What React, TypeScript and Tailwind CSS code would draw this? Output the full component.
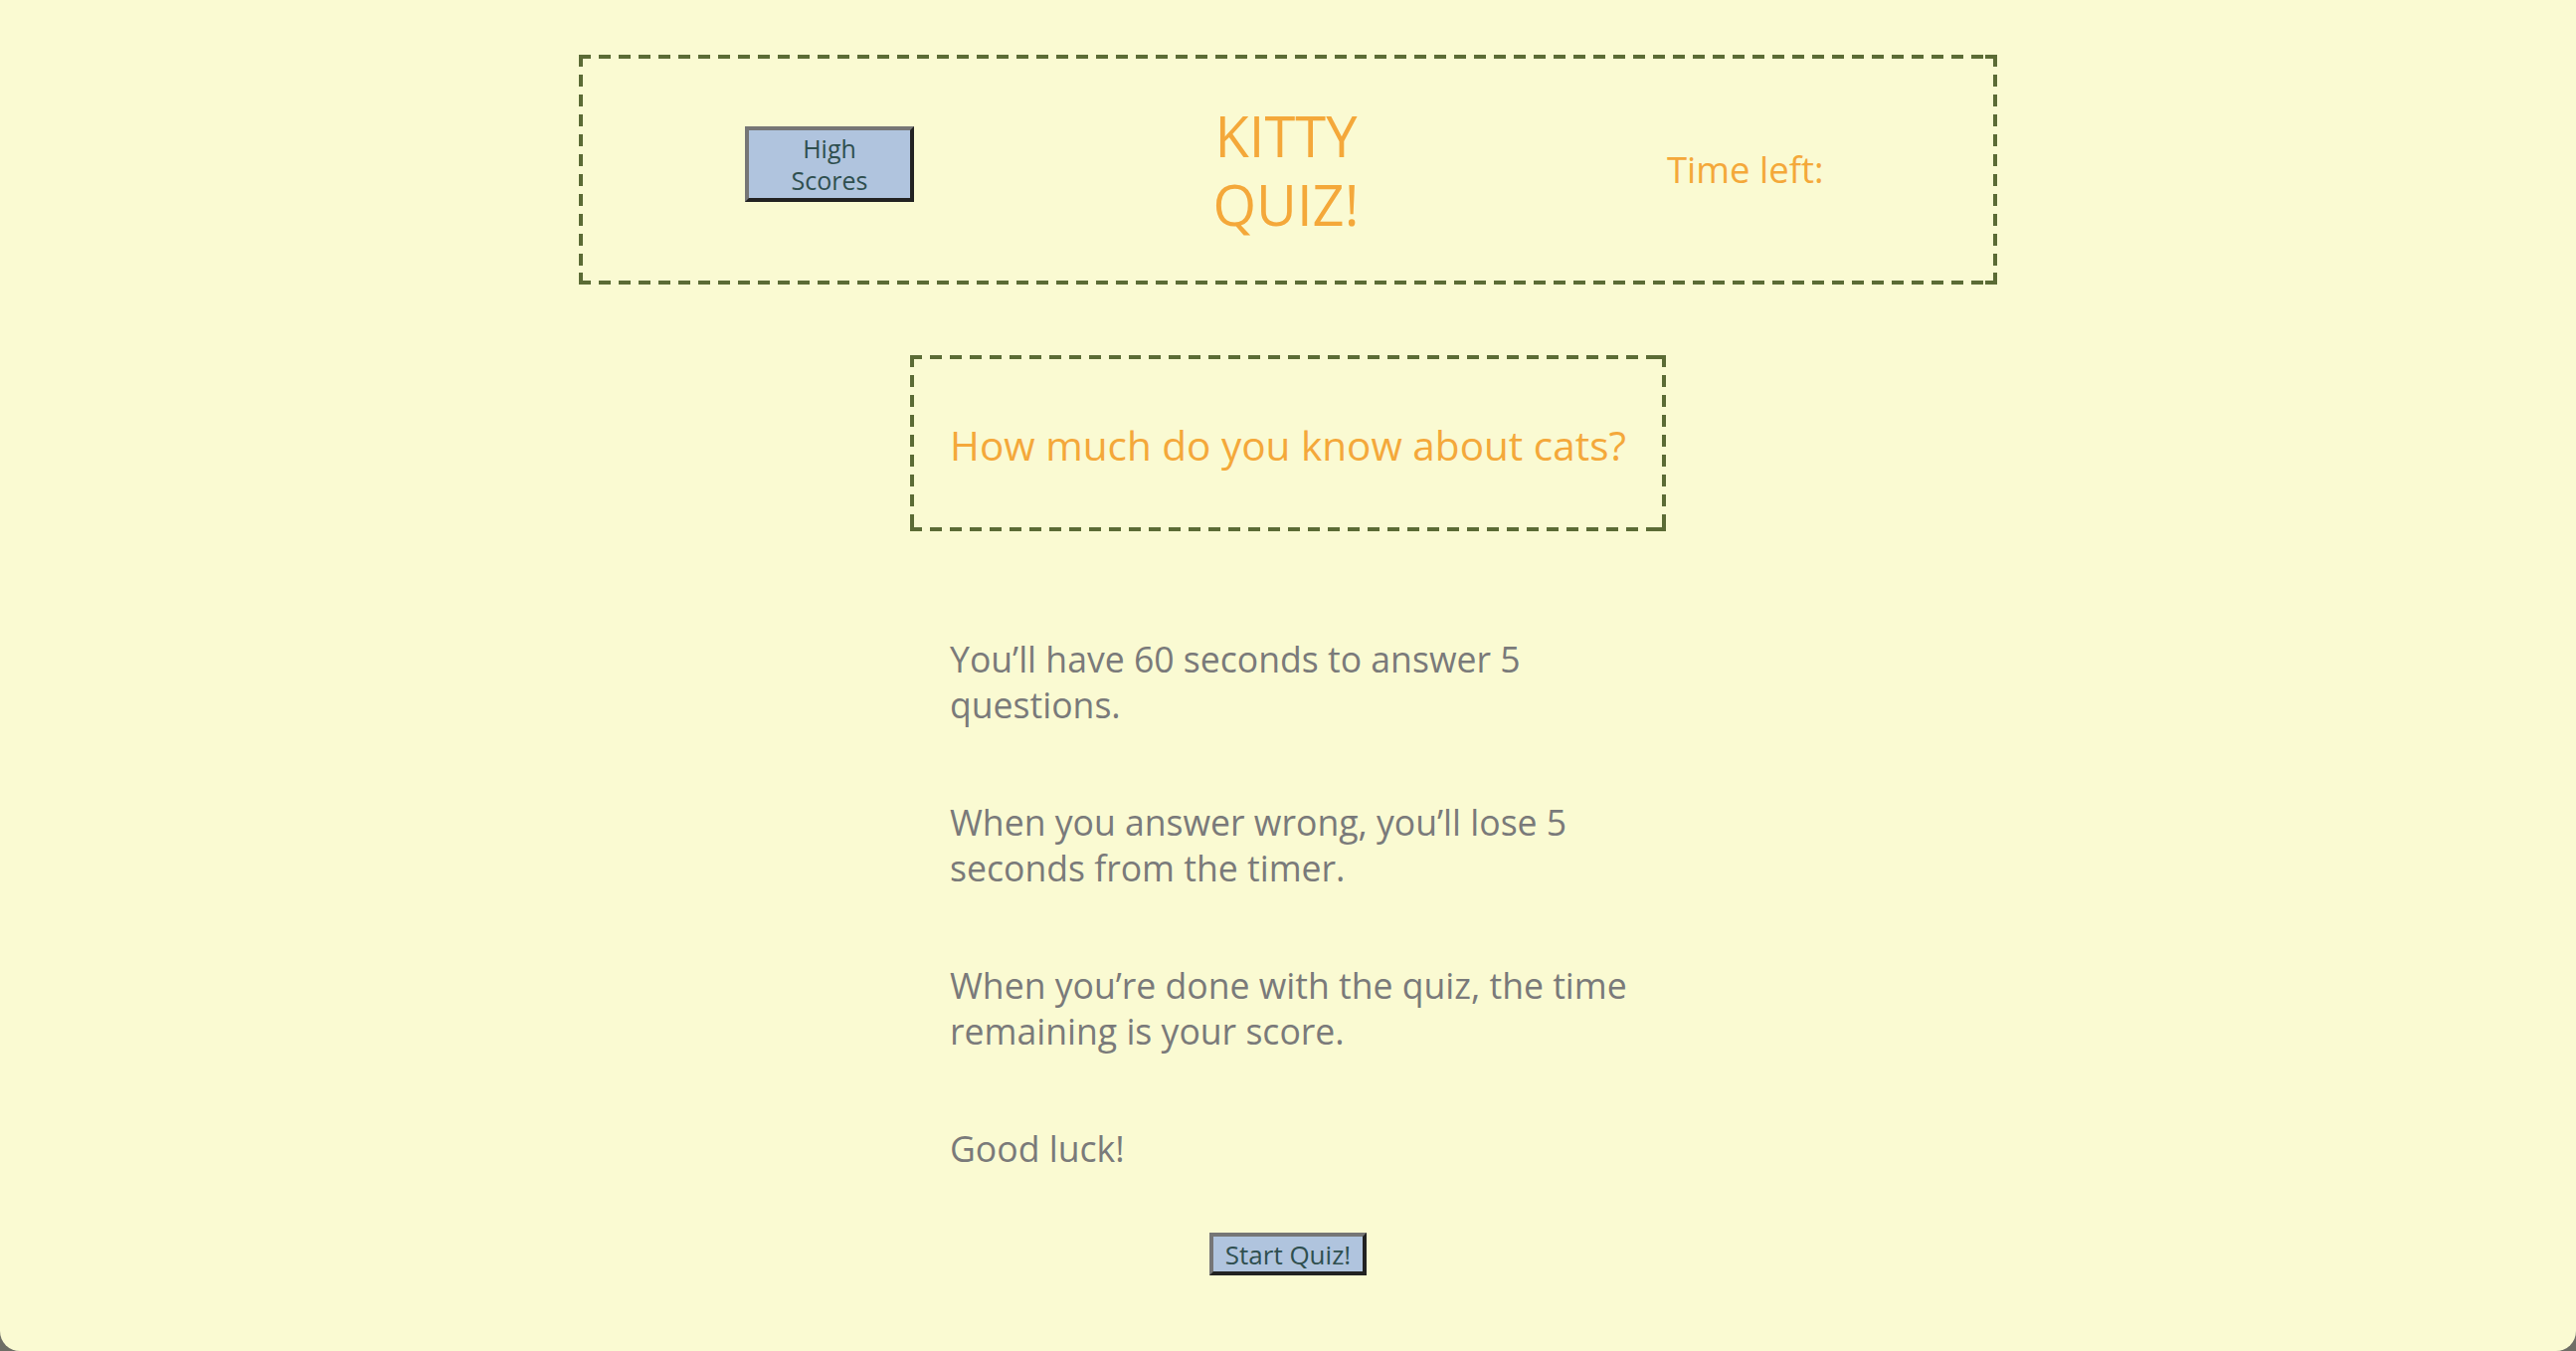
import React from "react";

const font = { fontFamily: '"Open Sans", "Liberation Sans", sans-serif' };

export default function App() {
  return (
    <div className="h-[1358px] w-full bg-[#6e6e66]" style={font}>
      <div className="flex h-full w-full flex-col items-center rounded-b-[20px] bg-[#fafad2]">
        <header className="mt-[55px] flex h-[231px] w-[1426px] items-center pl-[167px] [background:repeating-linear-gradient(90deg,#5b6b35_0_12px,transparent_12px_20px)_left_top/100%_4px_no-repeat,repeating-linear-gradient(90deg,#5b6b35_0_12px,transparent_12px_20px)_left_bottom/100%_4px_no-repeat,repeating-linear-gradient(180deg,#5b6b35_0_12px,transparent_12px_20px)_left_top/4px_100%_no-repeat,repeating-linear-gradient(180deg,#5b6b35_0_12px,transparent_12px_20px)_right_top/4px_100%_no-repeat,linear-gradient(#5b6b35,#5b6b35)_right_top/12px_4px_no-repeat,linear-gradient(#5b6b35,#5b6b35)_right_bottom/12px_4px_no-repeat,linear-gradient(#5b6b35,#5b6b35)_left_bottom/4px_12px_no-repeat,linear-gradient(#5b6b35,#5b6b35)_right_bottom/4px_12px_no-repeat]">
          <button className="mb-[12px] h-[76px] w-[170px] border-4 border-t-[#767676] border-l-[#767676] border-b-[#222222] border-r-[#222222] bg-[#b0c4de] text-[25px] leading-[32px] text-[#2f4f4f]">
            High
            <br />
            Scores
          </button>
          <div className="ml-[274px] flex w-[200px] flex-col items-center text-[56px] leading-[69px] text-[#f4a83a]">
            <h1>KITTY</h1>
            <span>QUIZ!</span>
          </div>
          <div className="ml-[283px] text-[36.5px] text-[#f4a83a]">Time left:</div>
        </header>

        <section className="mt-[71px] flex h-[177px] w-[760px] items-center justify-center [background:repeating-linear-gradient(90deg,#5b6b35_0_12px,transparent_12px_20px)_left_top/100%_4px_no-repeat,repeating-linear-gradient(90deg,#5b6b35_0_12px,transparent_12px_20px)_left_bottom/100%_4px_no-repeat,repeating-linear-gradient(180deg,#5b6b35_0_12px,transparent_12px_20px)_left_top/4px_100%_no-repeat,repeating-linear-gradient(180deg,#5b6b35_0_12px,transparent_12px_20px)_right_top/4px_100%_no-repeat,linear-gradient(#5b6b35,#5b6b35)_right_top/12px_4px_no-repeat,linear-gradient(#5b6b35,#5b6b35)_right_bottom/12px_4px_no-repeat,linear-gradient(#5b6b35,#5b6b35)_left_bottom/4px_12px_no-repeat,linear-gradient(#5b6b35,#5b6b35)_right_bottom/4px_12px_no-repeat]">
          <h2 className="pt-[6px] text-[40.5px] text-[#f4a83a]">How much do you know about cats?</h2>
        </section>

        <div className="mt-[105px] flex w-[760px] flex-col gap-[72px] pl-[40px] pr-[28px] text-[35.6px] leading-[46px] text-[#7a7a7a]">
          <p>You’ll have 60 seconds to answer 5 questions.</p>
          <p>When you answer wrong, you’ll lose 5 seconds from the timer.</p>
          <p>When you’re done with the quiz, the time remaining is your score.</p>
          <p>Good luck!</p>
        </div>

        <button className="mt-[62px] h-[43px] w-[158px] border-4 border-t-[#767676] border-l-[#767676] border-b-[#222222] border-r-[#222222] bg-[#b0c4de] text-[26px] leading-[30px] text-[#2f4f4f]">
          Start Quiz!
        </button>
      </div>
    </div>
  );
}
